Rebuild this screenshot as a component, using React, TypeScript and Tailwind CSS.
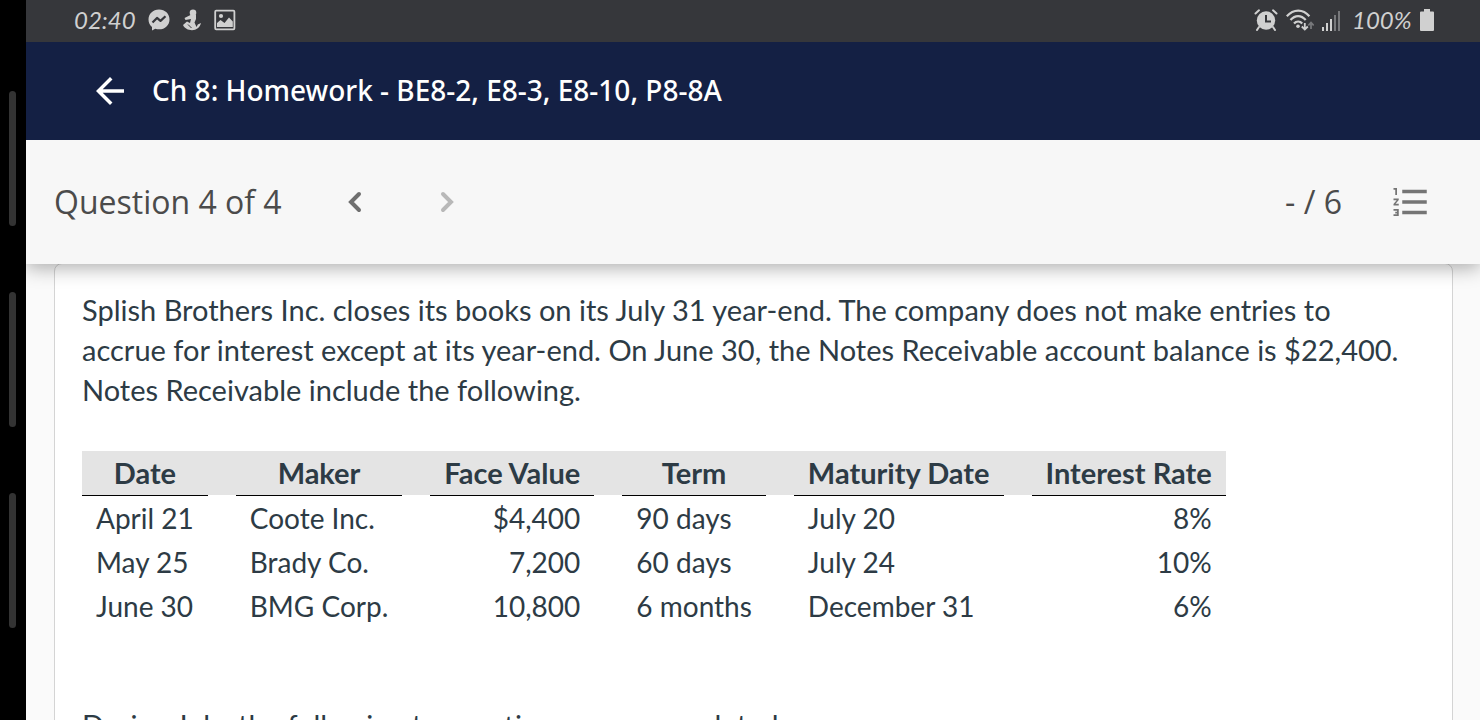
import { ReactNode } from "react";
import { MdArrowBack, MdFormatListNumbered } from "react-icons/md";

interface Note {
  date: string
  maker: string
  faceValue: string
  term: string
  maturity: string
  rate: string
}

const notes: Note[] = [
  { date: "April 21", maker: "Coote Inc.", faceValue: "$4,400", term: "90 days", maturity: "July 20", rate: "8%" },
  { date: "May 25", maker: "Brady Co.", faceValue: "7,200", term: "60 days", maturity: "July 24", rate: "10%" },
  { date: "June 30", maker: "BMG Corp.", faceValue: "10,800", term: "6 months", maturity: "December 31", rate: "6%" },
]

const MessengerIcon = () => (
  <svg className="w-[22px] h-[22px]" viewBox="0 0 22 22" aria-hidden="true">
    <path fill="#d0d0d0" d="M11 .5C4.9.5.5 4.9.5 10.500c0 3 1.300 5.600 3.500 7.400V21.500l3.300-1.800c1.200.4 2.400.6 3.700.6 6.100 0 10.500-4.300 10.500-9.900S17.100.5 11 .5z" />
    <path fill="none" stroke="#36373b" strokeWidth="2.200" strokeLinejoin="round" d="M4.500 13.500l4.500-4.600 3.500 3 5-4.600" />
  </svg>
)

const FigureIcon = () => (
  <svg className="w-5 h-[22px]" viewBox="0 0 18 22" fill="#d0d0d0" aria-hidden="true">
    <circle cx="10" cy="3.800" r="3.300" />
    <path d="M7.500 6L1.500 9 2.500 11 8 10 7 14 4 12.500 0 16c1.500 3.200 5 5.200 9 5.200 4.500 0 8-2.700 9-7.200l-3.200 1.500-1.300 2.500-2-4.500L13 10V6z" />
    <path fill="none" stroke="#36373b" strokeWidth="1" d="M5 15.500l3.500 3.500" />
  </svg>
)

const PictureIcon = () => (
  <svg className="w-[22px] h-[22px]" viewBox="0 0 22 22" aria-hidden="true">
    <rect x="1.200" y="1.700" width="19.200" height="18.600" rx="1" fill="none" stroke="#d0d0d0" strokeWidth="1.800" />
    <circle cx="7" cy="7" r="2.100" fill="#d0d0d0" />
    <path fill="#d0d0d0" d="M3 18v-4l3.500-3 4 3L15 8.500l3.800 4V18z" />
  </svg>
)

const AlarmIcon = () => (
  <svg className="w-[24px] h-[22px]" viewBox="0 0 24 22" aria-hidden="true">
    <circle cx="12" cy="11.500" r="9.200" fill="#d0d0d0" />
    <path fill="none" stroke="#36373b" strokeWidth="2" d="M12 6v6.500h5" />
    <path fill="none" stroke="#d0d0d0" strokeWidth="2" strokeLinecap="round" d="M1.500 4.500L5 1.300M22.500 4.500L19 1.300M5 18l-2 3M19 18l2 3" />
  </svg>
)

const WifiIcon = () => (
  <svg className="w-[28px] h-[22px]" viewBox="0 0 28 22" fill="none" aria-hidden="true">
    <path stroke="#d0d0d0" strokeWidth="2.200" d="M.8 7.300C7.500-.3 17-.3 23.400 7.300M4.500 11c4.500-5.200 10.700-5.200 15.200 0M8 14.500c2.300-2.700 6-2.700 8.200 0" />
    <circle cx="12" cy="17.200" r="1.800" fill="#d0d0d0" />
    <path stroke="#d0d0d0" strokeWidth="1.800" d="M18.800 14v6M15.800 17.500l3 3 3-3" />
    <path stroke="#77787b" strokeWidth="1.800" d="M25 20v-6M22.300 16.500l2.700-3 2.700 3" />
  </svg>
)

const SignalIcon = () => (
  <svg className="w-[18px] h-[21px]" viewBox="0 0 18 21" aria-hidden="true">
    <path fill="#d0d0d0" d="M0 17h2v4H0zM4 13h2v8H4zM8 9h2v12H8z" />
    <path fill="#77787b" d="M12 5h2v16h-2zM16 1h2v20h-2z" />
  </svg>
)

const BatteryIcon = () => (
  <svg className="w-[14px] h-[22px]" viewBox="0 0 14 22" aria-hidden="true">
    <path fill="#d0d0d0" d="M4 0h6v2.500h3a1 1 0 0 1 1 1V21a1 1 0 0 1-1 1H1a1 1 0 0 1-1-1V3.500a1 1 0 0 1 1-1h3z" />
  </svg>
)

const StatusBar = () => (
  <div className="h-[42px] shrink-0 bg-[#36373b] text-[#d0d0d0] flex items-center justify-between pl-12 pr-[46px] pb-[2px] font-['Lato',sans-serif] italic text-2xl">
    <div className="flex items-center gap-3">
      <span className="w-[62px]">02:40</span>
      <MessengerIcon />
      <FigureIcon />
      <PictureIcon />
    </div>
    <div className="flex items-center gap-2">
      <AlarmIcon />
      <WifiIcon />
      <SignalIcon />
      <div className="flex items-center gap-1 pl-1">
        <span className="w-16">100%</span>
        <BatteryIcon />
      </div>
    </div>
  </div>
)

const SideRail = () => (
  <div className="w-[26px] shrink-0 bg-black flex flex-col gap-[66px] pl-[9px] pt-[91px]">
    <div className="w-[7px] h-[135px] shrink-0 rounded-full bg-[#333333]" />
    <div className="w-[7px] h-[135px] shrink-0 rounded-full bg-[#333333]" />
    <div className="w-[7px] h-[135px] shrink-0 rounded-full bg-[#333333]" />
  </div>
)

const HeadCell = ({ children }: { children: ReactNode }) => (
  <th scope="col" className="h-[45px] border-b border-black bg-[#e4e4e4] px-[14px] font-bold whitespace-nowrap">{children}</th>
)

// narrow column between two headings, shaded but not underlined
const HeadGap = () => (
  <td className="w-7 border-b border-white bg-[#e4e4e4] bg-clip-padding" />
)

const NotesTable = () => (
  <table className="border-separate border-spacing-0 leading-[44px]">
    <thead className="text-[29px]">
      <tr>
        <HeadCell>Date</HeadCell>
        <HeadGap />
        <HeadCell>Maker</HeadCell>
        <HeadGap />
        <HeadCell>Face Value</HeadCell>
        <HeadGap />
        <HeadCell>Term</HeadCell>
        <HeadGap />
        <HeadCell>Maturity Date</HeadCell>
        <HeadGap />
        <HeadCell>Interest Rate</HeadCell>
      </tr>
    </thead>
    <tbody className="text-[28px]">
      {
        notes.map((n) => (
          <tr key={n.date} className="whitespace-nowrap">
            <td className="px-[14px]">{n.date}</td>
            <td />
            <td className="px-[14px]">{n.maker}</td>
            <td />
            <td className="px-[14px] text-right">{n.faceValue}</td>
            <td />
            <td className="px-[14px]">{n.term}</td>
            <td />
            <td className="px-[14px]">{n.maturity}</td>
            <td />
            <td className="px-[14px] text-right">{n.rate}</td>
          </tr>
        ))
      }
    </tbody>
  </table>
)

const App = () => {
  return (
    <div className="h-screen flex overflow-hidden bg-[#fafafa]">
      <SideRail />
      <div className="grow min-w-0 flex flex-col overflow-hidden">
        <StatusBar />
        <header className="relative z-20 h-[98px] shrink-0 bg-[#142044] text-white flex items-center gap-[21px] pl-[63px] font-['Noto_Sans',sans-serif]">
          <button type="button" aria-label="Back">
            <MdArrowBack className="w-[42px] h-[42px]" />
          </button>
          <h1 className="text-[28px] leading-10 pb-[2px] font-medium whitespace-nowrap">Ch 8: Homework - BE8-2, E8-3, E8-10, P8-8A</h1>
        </header>
        <div className="relative z-10 h-[124px] shrink-0 bg-[#f7f7f7] shadow-[0_4px_18px_rgba(0,0,0,0.32)] flex items-center justify-between pl-7 pr-12 text-[#4b4b4b] font-['Open_Sans',sans-serif] text-[32px]">
          <div className="flex items-center">
            <span className="whitespace-nowrap">Question 4 of 4</span>
            <div className="flex items-center gap-[50px] pl-[52px]">
              <button type="button" aria-label="Previous question" className="text-[#6f6f6f]">
                <svg className="w-[42px] h-[42px]" viewBox="0 0 42 42" fill="none" stroke="currentColor" strokeWidth="4" strokeLinecap="round">
                  <path d="M25 13l-8 8 8 8" />
                </svg>
              </button>
              <button type="button" aria-label="Next question" className="text-[#b8b8b8]" disabled>
                <svg className="w-[42px] h-[42px]" viewBox="0 0 42 42" fill="none" stroke="currentColor" strokeWidth="4" strokeLinecap="round">
                  <path d="M17 13l8 8-8 8" />
                </svg>
              </button>
            </div>
          </div>
          <div className="flex items-center gap-12">
            <span>- / 6</span>
            <button type="button" aria-label="Question list" className="text-[#757575]">
              <MdFormatListNumbered className="w-[42px] h-[42px]" />
            </button>
          </div>
        </div>
        <main className="grow min-h-0 overflow-hidden -mt-px pl-7 pr-[27px] text-[#2d3b45] font-['Lato',sans-serif]">
          <div className="rounded-lg border border-[#d4d4d4] bg-white pl-[27px] pr-10 pt-[26px] pb-10">
            <p className="text-[29px] leading-10">
              Splish Brothers Inc. closes its books on its July 31 year-end. The company does not make entries to accrue for interest except at its year-end. On June 30, the Notes Receivable account balance is $22,400. Notes Receivable include the following.
            </p>
            <div className="pt-[41px] pb-[77px]">
              <NotesTable />
            </div>
            <p className="text-[29px] leading-10">During July, the following transactions were completed.</p>
          </div>
        </main>
      </div>
    </div>
  );
}

export default App;
